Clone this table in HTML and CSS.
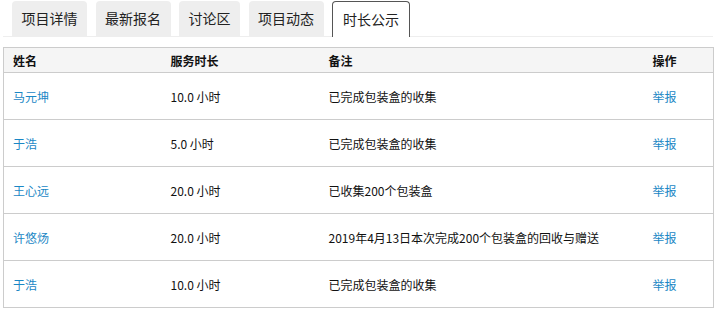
FILE: index.html
```html
<!DOCTYPE html>
<html lang="zh">
<head>
<meta charset="utf-8">
<link rel="stylesheet" href="styles.css">
</head>
<body>
<div class="page">
  <div class="tabs">
    <div class="tab">项目详情</div>
    <div class="tab">最新报名</div>
    <div class="tab">讨论区</div>
    <div class="tab">项目动态</div>
    <div class="tab active">时长公示</div>
  </div>
  <table class="list">
    <colgroup>
      <col class="c1"><col class="c2"><col class="c3"><col class="c4">
    </colgroup>
    <thead>
      <tr><th>姓名</th><th>服务时长</th><th>备注</th><th>操作</th></tr>
    </thead>
    <tbody>
      <tr><td><a class="link">马元坤</a></td><td>10.0 小时</td><td>已完成包装盒的收集</td><td><a class="link">举报</a></td></tr>
      <tr><td><a class="link">于浩</a></td><td>5.0 小时</td><td>已完成包装盒的收集</td><td><a class="link">举报</a></td></tr>
      <tr><td><a class="link">王心远</a></td><td>20.0 小时</td><td>已收集200个包装盒</td><td><a class="link">举报</a></td></tr>
      <tr><td><a class="link">许悠炀</a></td><td>20.0 小时</td><td>2019年4月13日本次完成200个包装盒的回收与赠送</td><td><a class="link">举报</a></td></tr>
      <tr><td><a class="link">于浩</a></td><td>10.0 小时</td><td>已完成包装盒的收集</td><td><a class="link">举报</a></td></tr>
    </tbody>
  </table>
</div>
</body>
</html>
```

FILE: styles.css
```css
html, body {
  margin: 0;
  padding: 0;
  background: #fff;
}
body {
  font-family: "Noto Sans CJK SC", "Liberation Sans", sans-serif;
  color: #111;
}
.page {
  padding: 1px 9px 0 3px;
}
.tabs {
  display: flex;
  gap: 8.5px;
  padding-left: 9px;
  border-bottom: 1px solid #eeeeee;
  height: 35px;
}
.tab {
  height: 35px;
  box-sizing: border-box;
  padding: 0 9.5px;
  background: #eeeeee;
  border-radius: 4px 4px 0 0;
  font-size: 14px;
  line-height: 35px;
  color: #222;
  white-space: nowrap;
}
.tab.active {
  background: #fff;
  border: 1px solid #555;
  border-bottom: none;
  height: 36px;
  line-height: 34px;
  padding: 0 10px;
  margin-bottom: -1px;
}
.list {
  margin-top: 10px;
  width: 710px;
  border-collapse: collapse;
  border: 1px solid #cccccc;
  table-layout: fixed;
  font-size: 12px;
}
.c1 { width: 158px; }
.c2 { width: 158px; }
.c3 { width: 324px; }
.c4 { width: 70px; }
.list th {
  background: #f5f5f5;
  height: 24px;
  padding: 0 0 0 9px;
  text-align: left;
  font-weight: bold;
  color: #111;
  border-bottom: 1px solid #cccccc;
}
.list td {
  height: 46px;
  padding: 0 0 0 9px;
  border-bottom: 1px solid #cccccc;
  white-space: nowrap;
}
.link {
  color: #1a87c5;
  text-decoration: none;
}
```
